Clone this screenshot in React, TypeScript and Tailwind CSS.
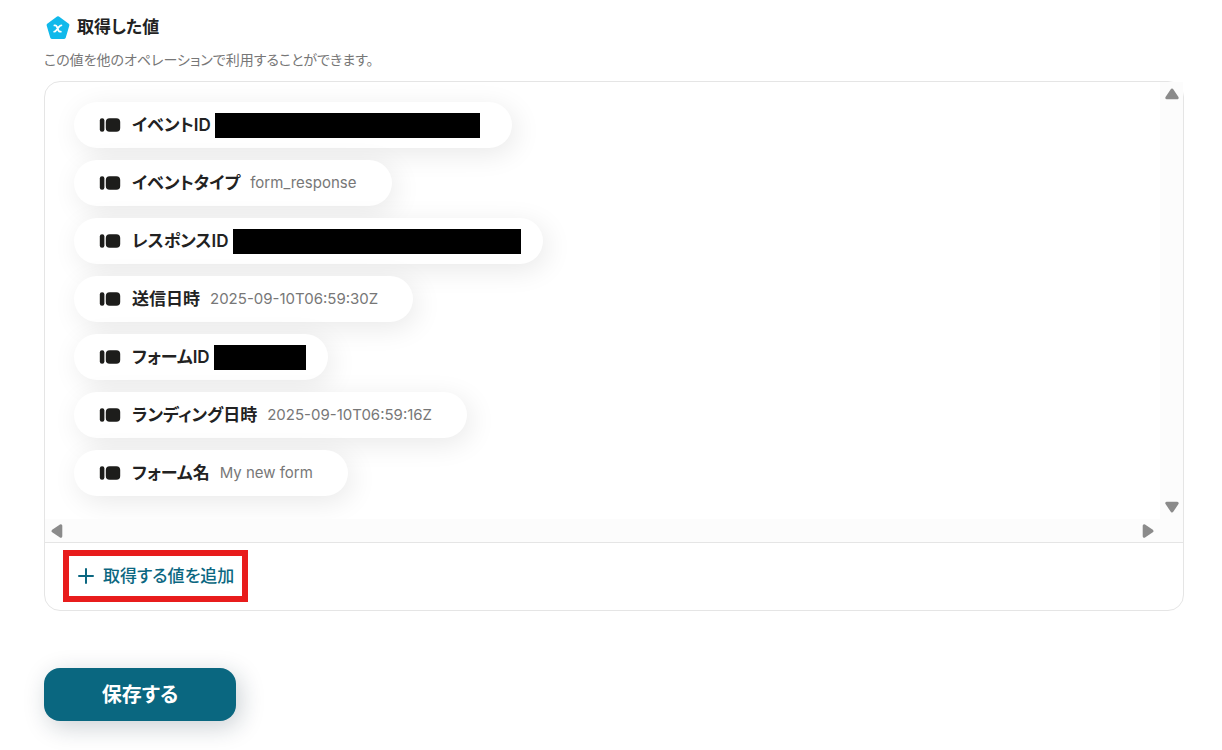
type OutputValue = {
  label: string;
  value?: string;
  masked?: string;
};

const outputs: OutputValue[] = [
  { label: 'イベントID', masked: 'mr-8 w-[265px]' },
  { label: 'イベントタイプ', value: 'form_response' },
  { label: 'レスポンスID', masked: 'mr-[22px] w-[288px]' },
  { label: '送信日時', value: '2025-09-10T06:59:30Z' },
  { label: 'フォームID', masked: 'mr-[22px] w-[92px]' },
  { label: 'ランディング日時', value: '2025-09-10T06:59:16Z' },
  { label: 'フォーム名', value: 'My new form' },
];

const arrows = {
  up: 'M8 4 L13.2 11.8 H2.8 Z',
  down: 'M8 12 L2.8 4.2 H13.2 Z',
  left: 'M4 8 L11.8 2.8 V13.2 Z',
  right: 'M12 8 L4.2 2.8 V13.2 Z',
};

const ScrollArrow = ({ direction, label }: { direction: keyof typeof arrows; label: string }) => (
  <button type="button" aria-label={label} className="flex size-6 items-center justify-center text-[#8b8b8b]">
    <svg viewBox="0 0 16 16" className="size-4" fill="currentColor" stroke="currentColor" strokeWidth="3" strokeLinejoin="round">
      <path d={arrows[direction]} />
    </svg>
  </button>
);

const ValueIcon = () => (
  <svg viewBox="0 0 22 14" className="h-[14px] w-[22px] shrink-0" fill="#1d1d1b">
    <rect x="0.8" y="0.2" width="4.6" height="13.6" rx="2.2" />
    <rect x="6.8" y="0.2" width="14.4" height="13.6" rx="3.8" />
  </svg>
);

const VariableIcon = () => (
  <svg viewBox="0 0 24 24" className="size-6" fill="none">
    <path d="M12 2.8 L21.8 10 L18.2 22.4 H5.8 L2.2 10 Z" fill="#10b9eb" stroke="#10b9eb" strokeWidth="3.2" strokeLinejoin="round" />
    <path
      d="M8.4 10.4 H9.2 C10.1 10.4 10.4 10.8 10.8 11.7 L12.4 15.4 C12.8 16.3 13.1 16.7 14 16.7 H14.8 M15.4 10.3 C14.4 10.3 13.8 10.9 13 11.9 L10.4 15.1 C9.7 16 9.2 16.7 8.2 16.7"
      stroke="#fff"
      strokeWidth="1.8"
      strokeLinecap="round"
    />
  </svg>
);

const ValuePill = ({ label, value, masked }: OutputValue) => (
  <li className="flex h-[46px] items-center rounded-full bg-white pl-[25px] shadow-[4px_6px_28px_rgba(0,0,0,0.09)]">
    <ValueIcon />
    <span className="ml-[11px] text-[17px] leading-6 font-semibold text-[#222]">{label}</span>
    {value && <span className="mr-[35px] ml-[10px] text-[15px] leading-6 text-[#777]">{value}</span>}
    {masked && <span className={`ml-1 h-[25px] bg-black ${masked}`} />}
  </li>
);

const App = () => {
  return (
    <main className="bg-white pt-[15px] pr-[38px] pb-[29px] pl-11 font-[Inter,'Noto_Sans_CJK_JP',sans-serif] [font-feature-settings:'palt'] text-[#222]" lang="ja">
      <header>
        <h1 className="flex items-center gap-[7px] pl-[2px] text-[17px] leading-6 font-semibold">
          <VariableIcon />
          取得した値
        </h1>
        <p className="mt-[11px] text-sm leading-5 text-[#777]">この値を他のオペレーションで利用することができます。</p>
      </header>

      <section className="mt-[11px] rounded-2xl border border-[#e5e5e5]">
        <div className="flex">
          <ul className="flex min-w-0 flex-1 flex-col items-start gap-3 overflow-hidden rounded-tl-2xl pt-5 pb-[23px] pl-[29px]">
            {outputs.map((output) => (
              <ValuePill key={output.label} {...output} />
            ))}
          </ul>
          <div className="flex w-[23px] flex-col items-center justify-between bg-[#fcfcfc]">
            <ScrollArrow direction="up" label="上へスクロール" />
            <ScrollArrow direction="down" label="下へスクロール" />
          </div>
        </div>
        <div className="flex h-[23px] items-center justify-between bg-[#fcfcfc] pr-[23px]">
          <ScrollArrow direction="left" label="左へスクロール" />
          <ScrollArrow direction="right" label="右へスクロール" />
        </div>
        <div className="border-t border-[#e5e5e5] px-[18px] pt-[7px] pb-2">
          <button
            type="button"
            className="flex h-[52px] items-center gap-2 border-6 border-[#e81c1c] px-2 text-[17px] leading-6 font-medium text-[#0b6781]"
          >
            <svg viewBox="0 0 18 18" className="size-[18px]" stroke="currentColor" strokeWidth="2" strokeLinecap="round">
              <path d="M9 2 V16 M2 9 H16" />
            </svg>
            取得する値を追加
          </button>
        </div>
      </section>

      <button
        type="button"
        className="mt-[57px] h-[53px] w-48 rounded-2xl bg-[#0a6780] text-xl leading-6 font-bold text-white shadow-[4px_6px_24px_rgba(16,40,60,0.22)]"
      >
        保存する
      </button>
    </main>
  );
};

export default App;
